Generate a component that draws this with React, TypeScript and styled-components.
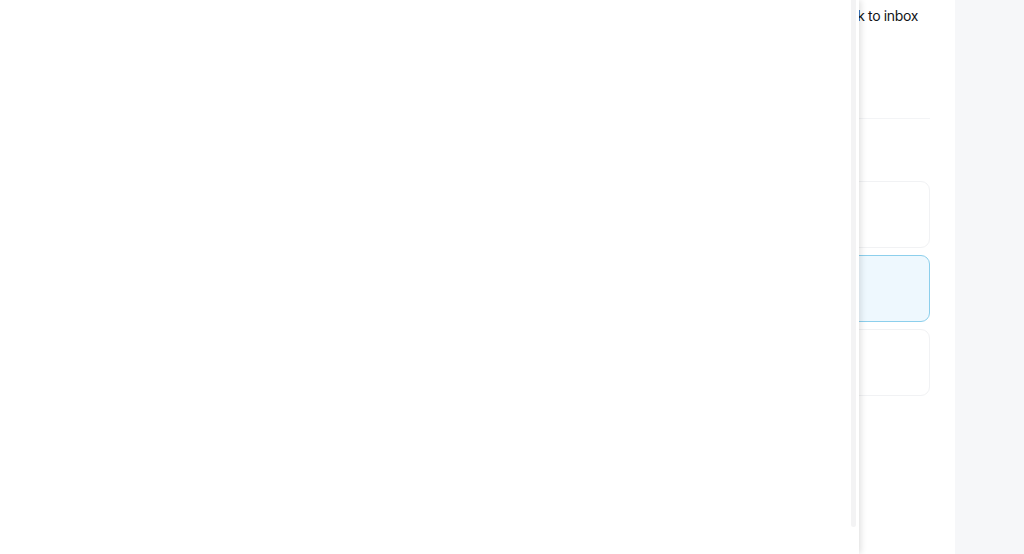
import React from "react";
import styled, { createGlobalStyle } from "styled-components";

const GlobalStyle = createGlobalStyle`
  html, body { margin: 0; padding: 0; height: 100%; overflow: hidden; }
  body { font-family: "Inter", "Liberation Sans", sans-serif; background: #ffffff; color: #1f2328; }
  #root { height: 100%; }
`;

const Page = styled.div`
  display: flex;
  height: 100vh;
  width: 100vw;
`;

const Main = styled.main`
  flex: 1;
  display: flex;
  justify-content: flex-end;
  background: #ffffff;
  padding-right: 25px;
`;

const Sidebar = styled.aside`
  width: 69px;
  background: #f6f7f9;
`;

const Column = styled.div`
  width: 420px;
  display: flex;
  flex-direction: column;
`;

const Header = styled.div`
  height: 118px;
  display: flex;
  justify-content: flex-end;
  align-items: flex-start;
  padding: 6px 12px 0 0;
  box-sizing: border-box;
`;

const BackLink = styled.a`
  font-family: "Inter", "Liberation Sans", sans-serif;
  font-size: 14px;
  font-weight: 400;
  line-height: 20px;
  color: #111418;
  text-decoration: none;
  letter-spacing: -0.35px;
`;

const Divider = styled.hr`
  margin: 0;
  border: none;
  height: 1px;
  background: #f3f4f6;
`;

const SectionGap = styled.div`
  height: 62px;
`;

const CardList = styled.div`
  display: flex;
  flex-direction: column;
  gap: 7px;
`;

const Card = styled.div<{ $selected?: boolean }>`
  height: 67px;
  box-sizing: border-box;
  border-radius: 9px;
  border: 1px solid ${(p) => (p.$selected ? "#8ccfec" : "#f1f2f4")};
  background: ${(p) => (p.$selected ? "#eef8fe" : "#ffffff")};
`;

const Overlay = styled.div`
  position: fixed;
  left: 0;
  top: 0;
  width: 859px;
  height: 100vh;
  background: #ffffff;
  box-shadow: 2px 0 6px rgba(0, 0, 0, 0.12);
`;

const ScrollTrack = styled.div`
  position: absolute;
  right: 3px;
  top: 0;
  width: 5px;
  height: 527px;
  background: #f3f3f4;
  border-radius: 0 0 3px 3px;
`;

export default function App() {
  return (
    <>
      <GlobalStyle />
      <Page>
        <Main>
          <Column>
            <Header>
              <BackLink href="#">← Back to inbox</BackLink>
            </Header>
            <Divider />
            <SectionGap />
            <CardList>
              <Card />
              <Card $selected />
              <Card />
            </CardList>
          </Column>
        </Main>
        <Sidebar />
      </Page>
      <Overlay>
        <ScrollTrack />
      </Overlay>
    </>
  );
}
